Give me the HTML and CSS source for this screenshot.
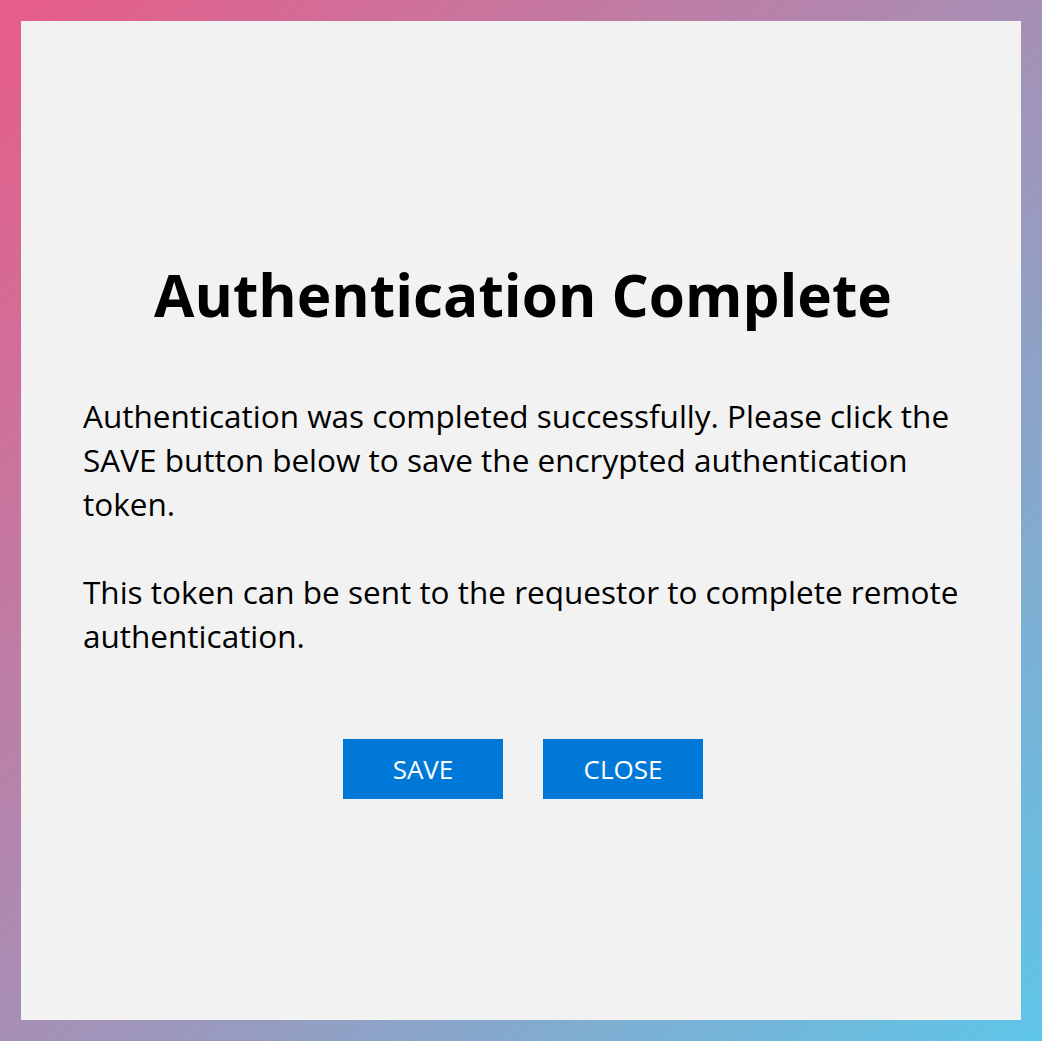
FILE: index.html
```html
<!DOCTYPE html>
<html lang="en">
<head>
<meta charset="utf-8">
<title>Authentication Complete</title>
<link rel="stylesheet" href="styles.css">
</head>
<body>
<main class="panel">
  <h1 class="title">Authentication Complete</h1>
  <p class="text">Authentication was completed successfully. Please click the SAVE button below to save the encrypted authentication token.</p>
  <p class="text text-second">This token can be sent to the requestor to complete remote authentication.</p>
  <div class="actions">
    <button class="btn" type="button">SAVE</button>
    <button class="btn" type="button">CLOSE</button>
  </div>
</main>
</body>
</html>
```

FILE: styles.css
```css
html, body {
  margin: 0;
  height: 100%;
}
body {
  background: linear-gradient(135deg, #e85c88 0%, #a78fb5 50%, #5ec6e8 100%);
  padding: 21px;
  box-sizing: border-box;
  font-family: "Open Sans", "Noto Sans", sans-serif;
  color: #000;
}
.panel {
  background: #f2f2f2;
  height: 100%;
  box-sizing: border-box;
  padding: 238px 58px 0 62px;
  display: flex;
  flex-direction: column;
}
.title {
  font-size: 58.5px;
  font-weight: 700;
  text-align: center;
  margin: 0 0 65px;
  line-height: 70px;
}
.text {
  font-size: 31.5px;
  line-height: 44px;
  margin: 0;
}
.text-second {
  margin-top: 44px;
}
.actions {
  display: flex;
  justify-content: center;
  gap: 40px;
  margin-top: 81px;
}
.btn {
  width: 160px;
  height: 60px;
  border: none;
  background: #0078d7;
  color: #fff;
  font-family: inherit;
  font-size: 26px;
  padding: 0;
}
```
